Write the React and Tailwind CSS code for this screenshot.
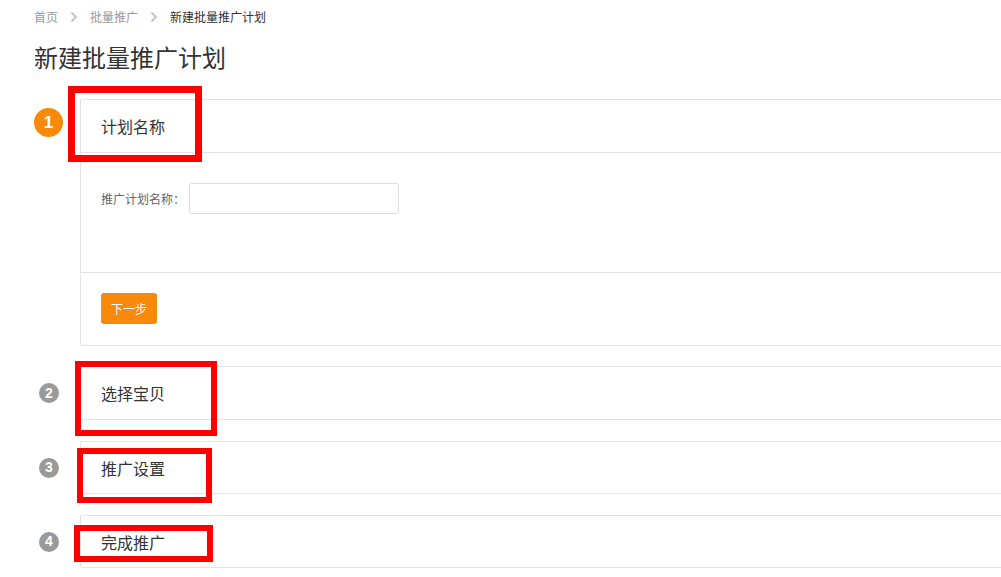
import React from "react";

const cjk = { fontFamily: '"Noto Sans CJK SC", "Noto Sans", sans-serif' };

function Chevron() {
  return (
    <svg width="8" height="12" viewBox="0 0 8 12" className="mx-[12px]">
      <path d="M1.5 1.5 L6 6 L1.5 10.5" fill="none" stroke="#c8c8c8" strokeWidth="2.2" />
    </svg>
  );
}

function StepHeader({ title, h = "h-[52px]" }) {
  return (
    <div className={`${h} flex items-center pl-[20px] text-[16px] text-[#333]`}>{title}</div>
  );
}

function GrayCircle({ n }) {
  return (
    <div className="w-[20px] h-[20px] rounded-full bg-[#9a9a9a] text-white text-[14px] font-bold flex items-center justify-center ml-[5px]" style={{ fontFamily: '"Liberation Sans", Arial, sans-serif' }}>
      {n}
    </div>
  );
}

function SmallStep({ n, title, mb, h }) {
  return (
    <div className={`flex ${mb}`}>
      <div className="w-[46px] shrink-0 flex items-center">
        <GrayCircle n={n} />
      </div>
      <div className="w-[960px] shrink-0 border border-[#e3e3e3] rounded-[2px]">
        <StepHeader title={title} h={h} />
      </div>
    </div>
  );
}

function RedBox({ className }) {
  return <div className={`absolute border-[#ff0000] ${className}`} />;
}

export default function App() {
  return (
    <div className="relative w-[1001px] h-[577px] overflow-hidden bg-white" style={cjk}>
      <div className="pl-[34px]">
        <div className="h-[34px] flex items-center text-[12px]">
          <span className="text-[#999]">首页</span>
          <Chevron />
          <span className="text-[#999]">批量推广</span>
          <Chevron />
          <span className="text-[#333]">新建批量推广计划</span>
        </div>
        <h1 className="text-[24px] leading-[32px] text-[#333] mt-[7px] mb-[26px]">新建批量推广计划</h1>

        <div className="flex mb-[20px]">
          <div className="w-[46px] shrink-0">
            <div className="w-[29px] h-[29px] rounded-full bg-[#f8890a] text-white text-[17px] font-bold flex items-center justify-center mt-[9px]" style={{ fontFamily: '"Liberation Sans", Arial, sans-serif' }}>
              1
            </div>
          </div>
          <div className="w-[960px] shrink-0 border border-[#e3e3e3] rounded-[2px]">
            <div className="border-b border-[#e3e3e3]">
              <StepHeader title="计划名称" />
            </div>
            <div className="h-[120px] border-b border-[#e3e3e3] pt-[30px] pl-[20px]">
              <div className="flex items-center">
                <span className="text-[12px] text-[#666] w-[88px]">推广计划名称：</span>
                <input className="w-[210px] h-[31px] border border-[#dcdcdc] rounded-[3px] outline-none px-2 text-[12px]" />
              </div>
            </div>
            <div className="h-[72px] pt-[20px] pl-[20px]">
              <button className="w-[56px] h-[31px] bg-[#f8890a] text-white text-[12px] rounded-[3px]">下一步</button>
            </div>
          </div>
        </div>

        <SmallStep n="2" title="选择宝贝" mb="mb-[21px]" h="h-[52px]" />
        <SmallStep n="3" title="推广设置" mb="mb-[21px]" h="h-[51px]" />
        <SmallStep n="4" title="完成推广" mb="" h="h-[51px]" />
      </div>

      <RedBox className="left-[68px] top-[86px] w-[134px] h-[76px] border-[7px]" />
      <RedBox className="left-[75px] top-[361px] w-[142px] h-[75px] border-[6px]" />
      <RedBox className="left-[77px] top-[448px] w-[135px] h-[55px] border-[6px]" />
      <RedBox className="left-[74px] top-[525px] w-[139px] h-[37px] border-[6px]" />
    </div>
  );
}
